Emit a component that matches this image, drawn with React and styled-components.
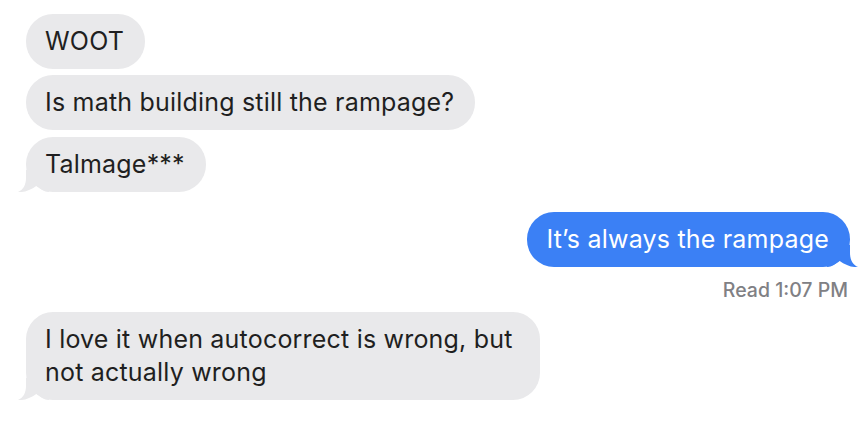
import React from "react";
import styled, { createGlobalStyle } from "styled-components";

const Global = createGlobalStyle`
  html, body { margin: 0; padding: 0; background: #ffffff; }
  body { font-family: Inter, "Liberation Sans", Arial, sans-serif; -webkit-font-smoothing: antialiased; }
`;

const Thread = styled.div`
  display: flex;
  flex-direction: column;
  align-items: flex-start;
  padding: 14px 18px 0 26px;
`;

const Bubble = styled.div`
  position: relative;
  max-width: 474px;
  padding: 11px 21px 11px 19px;
  border-radius: 27px;
  font-size: 25px;
  letter-spacing: 0.2px;
  line-height: 33px;
  color: ${(p) => (p.$sent ? "#ffffff" : "#1f1f21")};
  background: ${(p) => (p.$sent ? "#3b80f5" : "#e9e9eb")};
  align-self: ${(p) => (p.$sent ? "flex-end" : "flex-start")};
  margin-top: ${(p) => p.$gap || 0}px;
`;

const Text = styled.span`
  position: relative;
  z-index: 1;
`;

const Tail = styled.svg`
  position: absolute;
  bottom: 0;
  z-index: 0;
  width: 32px;
  height: 22px;
  ${(p) => (p.$sent ? "right: -9px; transform: scaleX(-1);" : "left: -9px;")}
`;

const Receipt = styled.div`
  align-self: flex-end;
  margin: 11px 2px 0 0;
  font-size: 19.5px;
  line-height: 24px;
  color: #808084;
  font-weight: 500;
`;

function BubbleTail({ sent }) {
  return (
    <Tail $sent={sent} viewBox="0 0 32 22" aria-hidden="true">
      <path
        d="M9 0 L9 8 C9 15 6 20 1 22 C7 22.5 13 20.5 20 15.5 C23 19 27 22 32 22 L32 0 Z"
        fill={sent ? "#3b80f5" : "#e9e9eb"}
      />
    </Tail>
  );
}

function Message({ children, sent, gap, tail }) {
  return (
    <Bubble $sent={sent} $gap={gap}>
      {tail && <BubbleTail sent={sent} />}
      <Text>{children}</Text>
    </Bubble>
  );
}

export default function App() {
  return (
    <>
      <Global />
      <Thread>
        <Message>WOOT</Message>
        <Message gap={6}>Is math building still the rampage?</Message>
        <Message gap={7} tail>Talmage***</Message>
        <Message sent gap={20} tail>It’s always the rampage</Message>
        <Receipt>Read 1:07 PM</Receipt>
        <Message gap={10} tail>
          I love it when autocorrect is wrong, but not actually wrong
        </Message>
      </Thread>
    </>
  );
}
